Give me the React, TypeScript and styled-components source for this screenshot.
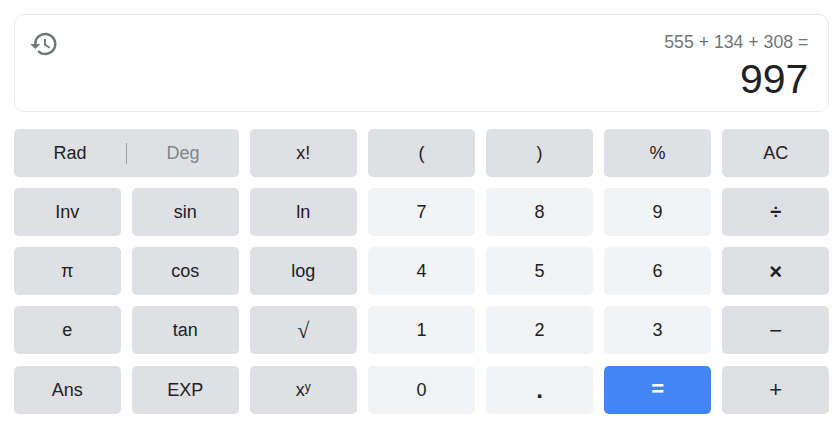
import React from "react";
import styled, { createGlobalStyle } from "styled-components";

const Global = createGlobalStyle`
  html, body { margin: 0; padding: 0; background: #fff; }
  body { font-family: "Liberation Sans", Arial, sans-serif; }
`;

const Page = styled.div`
  width: 836px;
  height: 428px;
  box-sizing: border-box;
  padding: 14px 6.7px 14px 13.6px;
  display: flex;
  flex-direction: column;
  gap: 16.6px;
`;

const Display = styled.div`
  margin-left: 0.4px;
  height: 98px;
  box-sizing: border-box;
  border: 1px solid #e8eaed;
  border-radius: 10px;
  padding: 13px 20px 0 14.5px;
  display: flex;
  justify-content: space-between;
`;

const HistoryIcon = styled.svg`
  width: 30px;
  height: 30px;
  margin-top: 1px;
  fill: #70757a;
  display: block;
`;

const Readout = styled.div`
  display: flex;
  flex-direction: column;
  align-items: flex-end;
`;

const Expression = styled.div`
  font-size: 17.7px;
  line-height: 28px;
  color: #70757a;
`;

const Result = styled.div`
  font-size: 41px;
  line-height: 47px;
  color: #202124;
`;

const Keys = styled.div`
  display: grid;
  grid-template-columns: repeat(7, 1fr);
  grid-auto-rows: 48.2px;
  column-gap: 10.9px;
  row-gap: 11.05px;
`;

type Tone = "fn" | "num" | "eq";

const Key = styled.div<{ $tone?: Tone; $bold?: boolean; $size?: number; $lift?: number; $serif?: boolean }>`
  border-radius: 5px;
  display: flex;
  align-items: center;
  justify-content: center;
  font-family: ${(p) => (p.$serif ? '"Liberation Serif", serif' : "inherit")};
  font-size: ${(p) => p.$size ?? 18}px;
  font-weight: ${(p) => (p.$bold ? 700 : 400)};
  padding-top: 1px;
  padding-bottom: ${(p) => p.$lift ?? 0}px;
  box-sizing: border-box;
  color: ${(p) => (p.$tone === "eq" ? "#fff" : "#202124")};
  background: ${(p) =>
    p.$tone === "eq" ? "#4285f4" : p.$tone === "num" ? "#f1f3f4" : "#dfe0e4"};
`;

const AngleKey = styled(Key)`
  grid-column: span 2;
  display: grid;
  grid-template-columns: 1fr 1fr;
`;

const AngleOption = styled.span<{ $off?: boolean; $divided?: boolean }>`
  text-align: center;
  line-height: 21px;
  color: ${(p) => (p.$off ? "#80868b" : "#202124")};
  border-left: ${(p) => (p.$divided ? "1px solid #9aa0a6" : "none")};
`;

const Power = styled.span`
  display: block;
`;

const Sup = styled.sup`
  font-size: 12px;
  line-height: 0;
  vertical-align: 5px;
`;

type K = { label: React.ReactNode; tone?: Tone; bold?: boolean; size?: number; lift?: number; serif?: boolean };

const keys: K[] = [
  { label: "x!" }, { label: "(" }, { label: ")" }, { label: "%" }, { label: "AC" },
  { label: "Inv" }, { label: "sin" }, { label: "ln" },
  { label: "7", tone: "num" }, { label: "8", tone: "num" }, { label: "9", tone: "num" }, { label: "÷", bold: true, size: 20 },
  { label: "π" }, { label: "cos" }, { label: "log" },
  { label: "4", tone: "num" }, { label: "5", tone: "num" }, { label: "6", tone: "num" }, { label: "×", bold: true, size: 22 },
  { label: "e" }, { label: "tan" }, { label: "√", size: 22, serif: true },
  { label: "1", tone: "num" }, { label: "2", tone: "num" }, { label: "3", tone: "num" }, { label: "−", size: 22 },
  { label: "Ans" }, { label: "EXP" }, { label: <Power>x<Sup>y</Sup></Power> },
  { label: "0", tone: "num" }, { label: ".", tone: "num", bold: true, size: 24 }, { label: "=", tone: "eq", bold: true, size: 22, lift: 3 }, { label: "+", size: 22 },
];

export default function App() {
  return (
    <Page>
      <Global />
      <Display>
        <HistoryIcon viewBox="0 0 24 24" aria-label="History">
          <path d="M13 3c-4.97 0-9 4.03-9 9H1l3.89 3.89.07.14L9 12H6c0-3.87 3.13-7 7-7s7 3.13 7 7-3.13 7-7 7c-1.93 0-3.68-.79-4.94-2.06l-1.42 1.42C8.27 19.99 10.51 21 13 21c4.97 0 9-4.03 9-9s-4.03-9-9-9zm-1 5v5l4.28 2.54.72-1.21-3.5-2.08V8H12z" />
        </HistoryIcon>
        <Readout>
          <Expression>555 + 134 + 308 =</Expression>
          <Result>997</Result>
        </Readout>
      </Display>
      <Keys>
        <AngleKey>
          <AngleOption>Rad</AngleOption>
          <AngleOption $off $divided>Deg</AngleOption>
        </AngleKey>
        {keys.map((k, i) => (
          <Key key={i} $tone={k.tone} $bold={k.bold} $size={k.size} $lift={k.lift} $serif={k.serif}>{k.label}</Key>
        ))}
      </Keys>
    </Page>
  );
}
